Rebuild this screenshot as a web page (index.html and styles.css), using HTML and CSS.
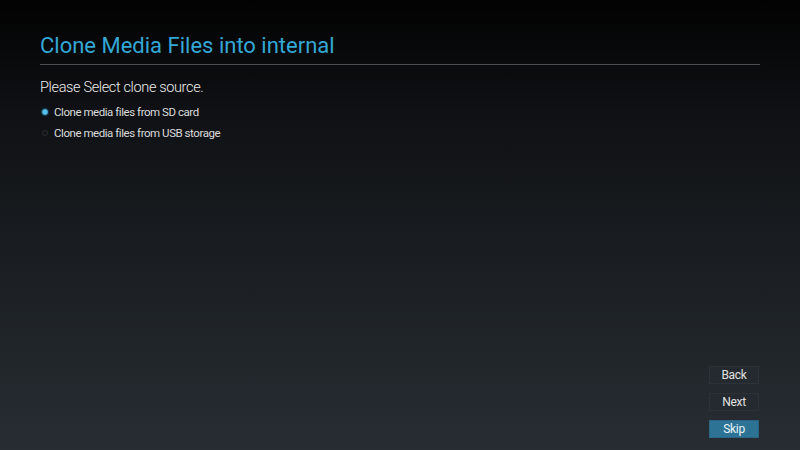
FILE: index.html
```html
<!DOCTYPE html>
<html>
<head>
<meta charset="utf-8">
<link rel="stylesheet" href="styles.css">
</head>
<body>
<div class="screen">
  <header class="header">
    <h1 class="title">Clone Media Files into internal</h1>
  </header>
  <main class="content">
    <p class="prompt">Please Select clone source.</p>
    <ul class="options">
      <li class="option selected"><span class="radio"></span><span class="label">Clone media files from SD card</span></li>
      <li class="option"><span class="radio"></span><span class="label">Clone media files from USB storage</span></li>
    </ul>
  </main>
  <nav class="actions">
    <button class="btn">Back</button>
    <button class="btn">Next</button>
    <button class="btn primary">Skip</button>
  </nav>
</div>
</body>
</html>
```
FILE: styles.css
```css
html, body {
  margin: 0;
  padding: 0;
  width: 800px;
  height: 450px;
  overflow: hidden;
}
body {
  font-family: Roboto, "Liberation Sans", sans-serif;
  background: linear-gradient(to bottom, #020202 0%, #0f1114 25%, #1b1f23 60%, #272d33 100%);
  color: #e6e6e6;
}
.screen {
  height: 450px;
  box-sizing: border-box;
  padding: 0 40px 12px 40px;
  display: flex;
  flex-direction: column;
}
.header {
  padding-top: 33px;
  border-bottom: 1px solid #4a4d52;
  padding-bottom: 5px;
}
.title {
  margin: 0;
  font-weight: 400;
  font-size: 22px;
  line-height: 26px;
  color: #33a7d6;
  letter-spacing: 0;
}
.content {
  flex: 1;
  padding-top: 13px;
}
.prompt {
  margin: 0;
  font-size: 14.5px;
  font-weight: 300;
  line-height: 20px;
  color: #ececec;
  letter-spacing: -0.35px;
}
.options {
  list-style: none;
  margin: 3px 0 0 0;
  padding: 0;
}
.option {
  display: flex;
  align-items: center;
  height: 21px;
  font-size: 11.5px;
  letter-spacing: -0.45px;
  color: #dcdcdc;
}
.radio {
  width: 6px;
  height: 6px;
  border-radius: 50%;
  margin: 0 6px 0 2px;
  border: 1px solid #2a2d31;
  box-sizing: border-box;
}
.option.selected .radio {
  background: #5fc3ea;
  border-color: #3ba6d3;
  box-shadow: 0 0 2px #33a7d6;
}
.actions {
  display: flex;
  flex-direction: column;
  align-items: flex-end;
  gap: 9px;
  padding-right: 1px;
}
.btn {
  width: 50px;
  height: 18px;
  padding: 0;
  font-family: Roboto, "Liberation Sans", sans-serif;
  font-size: 12px;
  letter-spacing: -0.3px;
  color: #e0e0e0;
  background: #252a30;
  border: 1px solid #2d3238;
  border-radius: 0;
}
.btn.primary {
  background: #2d7396;
  border-color: #2a6585;
  color: #e8f2f6;
}
```
